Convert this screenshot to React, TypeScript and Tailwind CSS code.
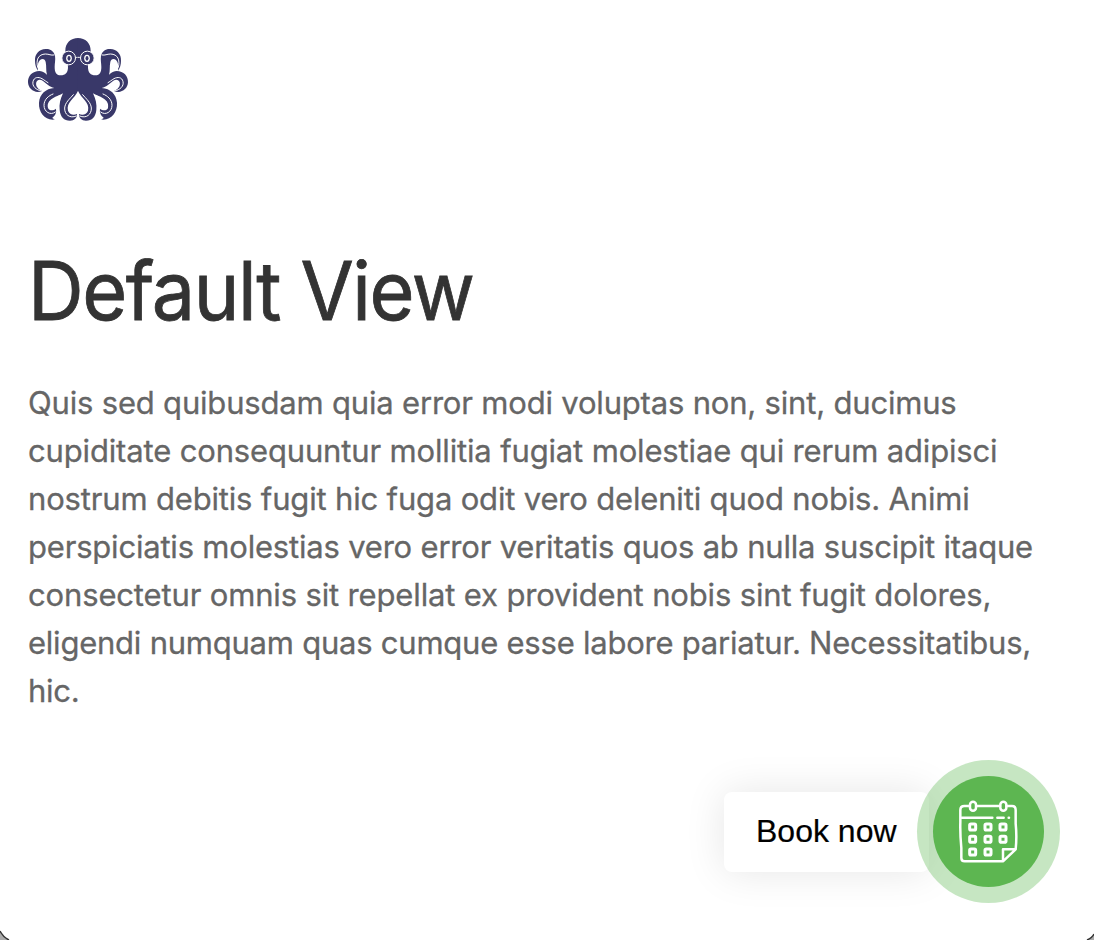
const lines = [
  { text: "Quis sed quibusdam quia error modi voluptas non, sint, ducimus", tracking: "tracking-[-0.185px]" },
  { text: "cupiditate consequuntur mollitia fugiat molestiae qui rerum adipisci", tracking: "tracking-[-0.155px]" },
  { text: "nostrum debitis fugit hic fuga odit vero deleniti quod nobis. Animi", tracking: "tracking-[-0.17px]" },
  { text: "perspiciatis molestias vero error veritatis quos ab nulla suscipit itaque", tracking: "tracking-[-0.2px]" },
  { text: "consectetur omnis sit repellat ex provident nobis sint fugit dolores,", tracking: "tracking-[-0.15px]" },
  { text: "eligendi numquam quas cumque esse labore pariatur. Necessitatibus,", tracking: "tracking-[-0.23px]" },
  { text: "hic.", tracking: "tracking-[-0.3px]" },
];

function OctopusHalf() {
  return (
    <g>
      <path
        fill="#393869"
        d="M175 24C151 24 136 40 136 62C136 83 144 95 144 111C144 128 136 136 122 136C108 136 104 126 104 111C104 98 107 91 105 77C101 63 91 56 77 57C57 58 44 72 45 92C45 103 48 114 54 122C52 109 53 97 60 90C67 84 75 86 77 96C80 109 77 121 81 135C83 141 86 146 91 149C83 134 72 123 58 123C37 123 23 138 24 157C25 178 45 192 67 183C53 178 46 168 49 157C52 147 61 147 69 153C79 161 88 171 103 174C77 176 59 192 57 218C55 249 78 274 106 268C102 267 99 266 97 263C106 257 110 247 108 236C99 244 87 242 84 234C79 207 107 202 129 190C121 207 117 223 119 240C121 261 132 272 150 272C163 272 172 264 171 252C161 257 148 254 144 242C138 217 164 207 175 181Z"
      />
      <path
        fill="none"
        stroke="white"
        strokeWidth="3"
        strokeLinecap="round"
        d="M53 112C47 89 55 73 76 72C88 72 92 77 102 75M65 183C47 180 36 168 39 155C42 141 55 140 66 146C74 151 79 155 84 158M106 246C91 258 72 245 72 226C72 208 86 197 99 192M169 258C149 267 133 253 134 234C135 218 149 207 160 194"
      />
      <circle cx="146" cy="84" r="20.5" fill="#393869" stroke="white" strokeWidth="3" />
      <path fill="none" stroke="white" strokeWidth="3" d="M166 84Q170 81 174 82" />
      <ellipse cx="147" cy="85" rx="8.5" ry="11" fill="white" />
      <ellipse cx="147" cy="85" rx="4.5" ry="7" fill="#393869" />
    </g>
  );
}

function Octopus() {
  return (
    <svg className="block h-[100px] w-[116px]" viewBox="0 0 348 300" aria-label="Octopus">
      <OctopusHalf />
      <g transform="translate(348 0) scale(-1 1)">
        <OctopusHalf />
      </g>
    </svg>
  );
}

function CalendarIcon() {
  const cells = [
    [83, 111], [129, 111], [174, 111],
    [83, 148], [129, 148], [174, 148],
    [83, 186], [129, 186],
  ];
  return (
    <svg
      className="mt-[3px] block size-[86px] shrink-0"
      viewBox="0 0 258 258"
      fill="none"
      stroke="white"
      strokeWidth="7.5"
      strokeLinecap="round"
      strokeLinejoin="round"
    >
      <path d="M74 48H58Q46 48 46 60V97Q45 134 49 174V204Q49 214 59 214H174L212 178Q216 140 212 101V60Q212 48 201 48H185M94 48H165M174 214V178H212" />
      <rect x="75" y="35" width="18" height="27" rx="9" />
      <rect x="166" y="35" width="18" height="27" rx="9" />
      <path d="M50 83H142M157 83H176M191 83H192" />
      {cells.map(([x, y]) => (
        <rect key={`${x}-${y}`} x={x - 9} y={y - 9} width="18" height="18" rx="4" strokeWidth="9" />
      ))}
    </svg>
  );
}

export default function App() {
  return (
    <div className="relative flex h-[940px] w-[1094px] flex-col overflow-hidden bg-white">
      <header className="pt-[30px] pl-5">
        <Octopus />
      </header>
      <main className="pl-7">
        <h1 className="mt-[112px] h-[98px] origin-left scale-x-[0.953] font-['Inter',sans-serif] text-[81px] leading-[98px] font-normal tracking-[-1.5px] whitespace-nowrap text-[#333] [-webkit-text-stroke:0.8px_#333]">
          Default View
        </h1>
        <p className="mt-[39px] font-['Inter',sans-serif] text-[31px] leading-[48px] whitespace-nowrap text-[#666] [-webkit-text-stroke:0.3px_#666]">
          {lines.map((line) => (
            <span key={line.text} className={`block ${line.tracking}`}>
              {line.text}
            </span>
          ))}
        </p>
      </main>
      <div className="mt-[45px] mr-[34.5px] flex items-center justify-end">
        <button className="-mr-3 flex h-20 w-[204.5px] items-center rounded-lg bg-white pb-0.5 pl-8 font-['Liberation_Sans',Arial,sans-serif] text-[32px] leading-none whitespace-nowrap text-black shadow-[0_0_40px_rgba(0,0,0,0.1)] [-webkit-text-stroke:0.2px_black]">
          Book now
        </button>
        <button
          aria-label="Book now"
          className="relative flex size-[143px] items-center justify-center rounded-full bg-[#5db651]/35"
        >
          <span className="flex size-[111px] items-center justify-center rounded-full bg-[#5db651]">
            <CalendarIcon />
          </span>
        </button>
      </div>
      <svg className="absolute bottom-0 left-0 h-[10px] w-[10px]" viewBox="0 0 10 10">
        <path d="M0 1Q3 7 9 10H0Z" fill="#aaa" />
        <path d="M0 1Q3 7 9 10" fill="none" stroke="#333" strokeWidth="1.5" />
      </svg>
      <svg className="absolute right-0 bottom-0 h-[10px] w-[10px]" viewBox="0 0 10 10">
        <path d="M10 4Q8 8 3 10H10Z" fill="#aaa" />
        <path d="M10 4Q8 8 3 10" fill="none" stroke="#333" strokeWidth="1.5" />
      </svg>
    </div>
  );
}
